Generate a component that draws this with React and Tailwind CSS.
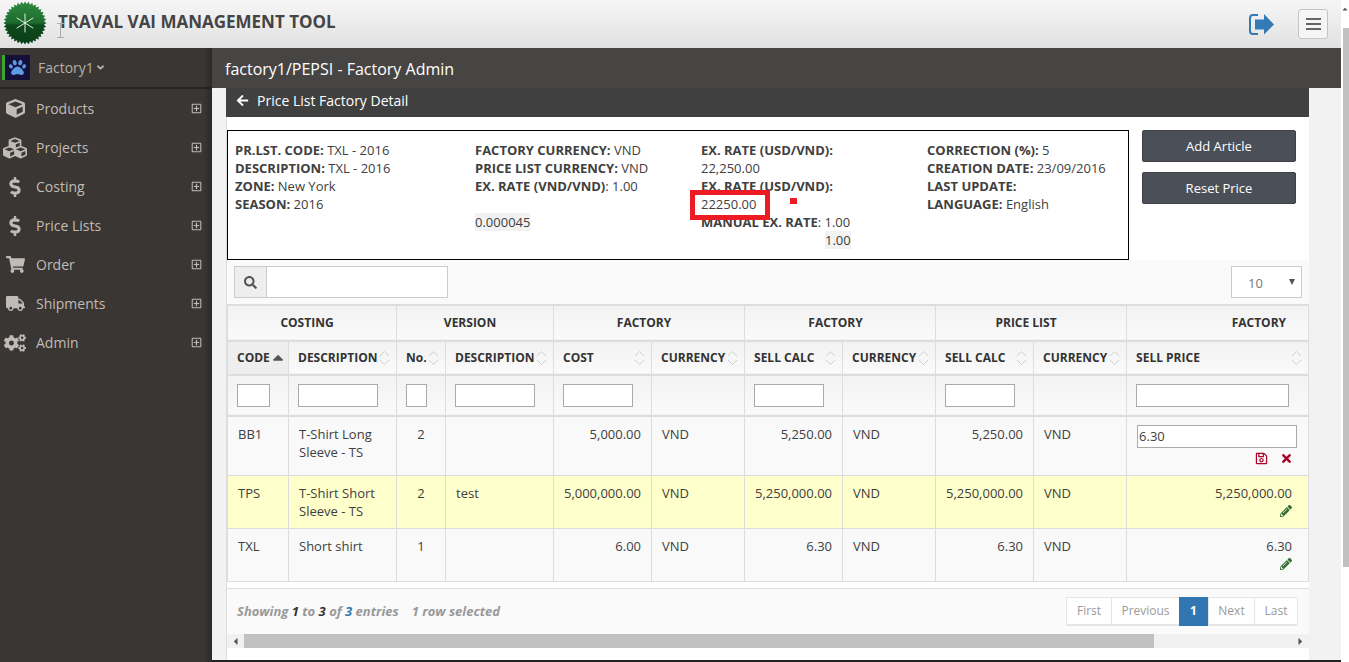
import React from 'react';
import {
    FaCube, FaCubes, FaDollarSign, FaShoppingCart, FaTruck, FaCogs, FaRegPlusSquare,
    FaArrowLeft, FaSearch, FaRegSave, FaTimes, FaPencilAlt, FaPaw, FaAngleDown, FaCaretUp, FaCaretLeft, FaCaretRight
} from 'react-icons/fa';

const menu = [
    { label: 'Products', icon: FaCube, size: 'text-[19px]' },
    { label: 'Projects', icon: FaCubes, size: 'text-[24px]' },
    { label: 'Costing', icon: FaDollarSign, size: 'text-[20px]' },
    { label: 'Price Lists', icon: FaDollarSign, size: 'text-[20px]' },
    { label: 'Order', icon: FaShoppingCart, size: 'text-[19px]' },
    { label: 'Shipments', icon: FaTruck, size: 'text-[19px]' },
    { label: 'Admin', icon: FaCogs, size: 'text-[22px]' },
];

const cols = [61, 108, 49, 108, 98, 93, 98, 93, 98, 93, 182];

const heads = [
    { label: 'CODE', sorted: true },
    { label: 'DESCRIPTION', filter: 'w-[80px]' },
    { label: 'No.', filter: 'w-[21px]' },
    { label: 'DESCRIPTION', filter: 'w-[80px]' },
    { label: 'COST', filter: 'w-[70px]' },
    { label: 'CURRENCY' },
    { label: 'SELL CALC', filter: 'w-[70px]' },
    { label: 'CURRENCY' },
    { label: 'SELL CALC', filter: 'w-[70px]' },
    { label: 'CURRENCY' },
    { label: 'SELL PRICE', filter: 'w-[153px]' },
];

const rows = [
    { h: 'h-[60px]', bg: 'bg-[#f9f9f9]', code: 'BB1', desc: ['T-Shirt Long', 'Sleeve - TS'], no: '2', ver: '', cost: '5,000.00', calc: '5,250.00', edit: true },
    { h: 'h-[53px]', bg: 'bg-[#ffffcc]', code: 'TPS', desc: ['T-Shirt Short', 'Sleeve - TS'], no: '2', ver: 'test', cost: '5,000,000.00', calc: '5,250,000.00', price: '5,250,000.00' },
    { h: 'h-[53px]', bg: 'bg-[#f9f9f9]', code: 'TXL', desc: ['Short shirt'], no: '1', ver: '', cost: '6.00', calc: '6.30', price: '6.30' },
];

const pages = [
    { label: 'First', w: 'w-[45px]' },
    { label: 'Previous', w: 'w-[68px]' },
    { label: '1', w: 'w-[29px]', active: true },
    { label: 'Next', w: 'w-[46px]' },
    { label: 'Last', w: 'w-[44px]', last: true },
];

const Sort = () => (
    <svg width="13" height="18" viewBox="0 0 13 18" fill="none" stroke="#cfcfcf" strokeWidth="1" className="shrink-0">
        <path d="M2 7 L6.5 2.5 L11 7" />
        <path d="M2 11 L6.5 15.5 L11 11" />
    </svg>
);

const Logo = () => {
    const teeth = [];
    for (let i = 0; i < 72; i++) {
        const a = (i * Math.PI) / 36;
        const r = i % 2 === 0 ? 21.5 : 19;
        teeth.push(`${22 + r * Math.cos(a)},${22 + r * Math.sin(a)}`);
    }
    return (
        <svg width="44" height="44" viewBox="0 0 44 44">
            <defs>
                <linearGradient id="logoGreen" x1="0" y1="0" x2="0" y2="1">
                    <stop offset="0" stopColor="#2f8a3f" />
                    <stop offset="0.5" stopColor="#1c6b2c" />
                    <stop offset="0.55" stopColor="#0d4a1c" />
                    <stop offset="1" stopColor="#0b3f17" />
                </linearGradient>
            </defs>
            <polygon points={teeth.join(' ')} fill="url(#logoGreen)" />
            <g stroke="#e8efe8" strokeWidth="1" strokeLinecap="round">
                <path d="M22 13 L22 31" />
                <path d="M14 17 L30 27" />
                <path d="M30 17 L14 27" />
            </g>
        </svg>
    );
};

const SignOut = () => (
    <svg width="25" height="21" viewBox="0 0 25 21" className="mr-[24px]">
        <path d="M9 1 H4 Q1 1 1 4 V17 Q1 20 4 20 H9" fill="none" stroke="#337ab7" strokeWidth="2" />
        <path d="M6 5.5 H15 V0 L25 10.5 L15 20.5 V15.5 H6 Z" fill="#337ab7" />
    </svg>
);

const Pair = ({ label, value }) => (
    <div>
        <b className="font-bold">{label}</b> {value}
    </div>
);

export default function App() {
    return (
        <div className="relative h-screen w-full overflow-hidden flex bg-white font-['Open_Sans',sans-serif] text-[13px] text-[#404040]">
            <div className="flex-1 min-w-0 flex flex-col">
                {/* Header */}
                <header className="h-[48px] shrink-0 flex items-center bg-gradient-to-b from-[#f6f6f6] to-[#e1e1e1]">
                    <div className="ml-[3px] mt-[-2px] flex"><Logo /></div>
                    <h1 className="ml-[11px] mt-[-5px] text-[17px] font-bold text-[#444]">TRAVAL VAI MANAGEMENT TOOL</h1>
                    <div className="ml-auto flex items-center pr-[13px]">
                        <SignOut />
                        <button className="w-[30px] h-[30px] border border-[#c4c4c4] rounded-[3px] bg-[#f5f5f5] flex flex-col items-center justify-center gap-[3px]">
                            <span className="w-[15px] h-[2px] bg-[#666]" />
                            <span className="w-[15px] h-[2px] bg-[#666]" />
                            <span className="w-[15px] h-[2px] bg-[#666]" />
                        </button>
                    </div>
                </header>

                <div className="flex-1 min-h-0 flex">
                    {/* Sidebar */}
                    <aside className="w-[212px] shrink-0 bg-gradient-to-r from-[#3a3633] from-[96%] to-[#2b2927] text-[#c0bbb7]">
                        <div className="h-[41px] flex items-center pl-[2px] border-b-2 border-[#252322]">
                            <span className="w-[3px] h-[25px] bg-[#3aa82e]" />
                            <span className="w-[25px] h-[25px] bg-[#14103a] flex items-center justify-center">
                                <FaPaw className="text-[#5b9be8] text-[17px]" />
                            </span>
                            <span className="ml-[8px] text-[14px] text-[#b5b0ac]">Factory1</span>
                            <FaAngleDown className="ml-[1px] text-[11px]" />
                        </div>
                        <nav>
                            {menu.map(item => {
                                const Icon = item.icon;
                                return (
                                    <div key={item.label} className="h-[39px] flex items-center text-[14px]">
                                        <span className="w-[36px] pr-[6px] flex justify-center"><Icon className={item.size} /></span>
                                        <span>{item.label}</span>
                                        <FaRegPlusSquare className="ml-auto mr-[10px] text-[11px]" />
                                    </div>
                                );
                            })}
                        </nav>
                    </aside>

                    {/* Content */}
                    <main className="flex-1 min-w-0 flex flex-col bg-[#f2f2f2] border-b-2 border-[#222]">
                        <div className="h-[40px] shrink-0 flex items-center pl-[13px] pt-[2px] bg-[#474544] text-white text-[16px]">
                            factory1/PEPSI - Factory Admin
                        </div>
                        <div className="flex-1 min-h-0 ml-[14px] mr-[32px] flex flex-col bg-white">
                            <div className="h-[29px] shrink-0 flex items-center pl-[10px] pb-[5px] bg-[#404040] text-white text-[14px]">
                                <FaArrowLeft className="text-[13px] mr-[8px]" />
                                Price List Factory Detail
                            </div>

                            <div className="flex flex-1 min-h-0 flex-col border-l border-[#ddd]">
                                {/* Info box and buttons */}
                                <div className="h-[143px] shrink-0 flex pt-[13px]">
                                    <div className="w-[902px] h-[130px] border border-black grid grid-cols-[240px_226px_226px_1fr] pl-[7px] pt-[10px] leading-[18px]">
                                        <div>
                                            <Pair label="PR.LST. CODE:" value="TXL - 2016" />
                                            <Pair label="DESCRIPTION:" value="TXL - 2016" />
                                            <Pair label="ZONE:" value="New York" />
                                            <Pair label="SEASON:" value="2016" />
                                        </div>
                                        <div>
                                            <Pair label="FACTORY CURRENCY:" value="VND" />
                                            <Pair label="PRICE LIST CURRENCY:" value="VND" />
                                            <div><b className="font-bold">EX. RATE (VND/VND)</b>: 1.00</div>
                                            <div className="h-[18px]" />
                                            <span className="bg-[#f2f2f2] inline-block">0.000045</span>
                                        </div>
                                        <div>
                                            <b className="font-bold block">EX. RATE (USD/VND):</b>
                                            <div>22,250.00</div>
                                            <b className="font-bold block">EX. RATE (USD/VND):</b>
                                            <div>22250.00</div>
                                            <div><b className="font-bold">MANUAL EX. RATE</b>: 1.00</div>
                                            <div className="pl-[124px]"><span className="bg-[#f2f2f2] inline-block">1.00</span></div>
                                        </div>
                                        <div>
                                            <Pair label="CORRECTION (%):" value="5" />
                                            <Pair label="CREATION DATE:" value="23/09/2016" />
                                            <Pair label="LAST UPDATE:" value="" />
                                            <Pair label="LANGUAGE:" value="English" />
                                        </div>
                                    </div>
                                    <div className="ml-[13px] flex flex-col gap-[10px]">
                                        <button className="w-[154px] h-[32px] pt-[1px] bg-[#4b4f57] border border-[#3d4047] text-white rounded-[2px]">Add Article</button>
                                        <button className="w-[154px] h-[32px] pt-[1px] bg-[#4b4f57] border border-[#3d4047] text-white rounded-[2px]">Reset Price</button>
                                    </div>
                                </div>

                                {/* Toolbar */}
                                <div className="h-[45px] shrink-0 flex items-start pt-[6px] pl-[7px] pr-[7px] bg-[#fafafa] border-b border-[#ddd]">
                                    <div className="flex h-[32px] w-[214px] border border-[#ccc]">
                                        <span className="w-[32px] flex items-center justify-center bg-[#eee] border-r border-[#ccc] text-[#555]">
                                            <FaSearch className="text-[13px]" />
                                        </span>
                                        <input className="flex-1 min-w-0 bg-white outline-none" />
                                    </div>
                                    <div className="ml-auto w-[71px] h-[32px] border border-[#ccc] bg-white flex items-center pl-[16px] text-[#777]">
                                        <span className="mt-[3px]">10</span>
                                        <span className="ml-[26px] w-0 h-0 border-x-[3.5px] border-x-transparent border-t-[6px] border-t-[#555]" />
                                    </div>
                                </div>

                                {/* Table */}
                                <table className="table-fixed border-collapse w-[1082px] shrink-0 bg-[#f9f9f9]">
                                    <colgroup>
                                        {cols.map((w, i) => <col key={i} style={{ width: w }} />)}
                                    </colgroup>
                                    <thead className="text-[12px] font-bold text-[#333]">
                                        <tr className="h-[35px] bg-gradient-to-b from-[#f2f2f2] to-[#fafafa] border-b-2 border-[#ddd]">
                                            <th colSpan={2} className="border border-[#ddd] font-bold pr-[10px]">COSTING</th>
                                            <th colSpan={2} className="border border-[#ddd] font-bold pr-[10px]">VERSION</th>
                                            <th colSpan={2} className="border border-[#ddd] font-bold pr-[10px]">FACTORY</th>
                                            <th colSpan={2} className="border border-[#ddd] font-bold pr-[9px]">FACTORY</th>
                                            <th colSpan={2} className="border border-[#ddd] font-bold pr-[10px]">PRICE LIST</th>
                                            <th className="border border-[#ddd] font-bold text-right pr-[22px]">FACTORY</th>
                                        </tr>
                                        <tr className="h-[34px] bg-gradient-to-b from-[#f2f2f2] to-[#fafafa] border-b-2 border-[#ddd]">
                                            {heads.map((h, i) => (
                                                <th key={i} className={`border border-[#ddd] font-bold pl-[9px] pr-[5px] ${h.sorted ? 'bg-[#eeeeee]' : ''}`}>
                                                    <div className="flex items-center justify-between">
                                                        <span className="whitespace-nowrap">{h.label}</span>
                                                        {h.sorted ? <FaCaretUp className="text-[#555] text-[17px] mr-[-3px]" /> : <Sort />}
                                                    </div>
                                                </th>
                                            ))}
                                        </tr>
                                        <tr className="h-[41px] bg-gradient-to-b from-[#f2f2f2] to-[#fafafa] border-b-2 border-[#ddd]">
                                            {heads.map((h, i) => (
                                                <th key={i} className="border border-[#ddd] pl-[9px] text-left">
                                                    {(h.filter || h.sorted) && (
                                                        <input className={`block h-[23px] bg-white border border-[#aaa] outline-none ${h.filter || 'w-[33px]'}`} />
                                                    )}
                                                </th>
                                            ))}
                                        </tr>
                                    </thead>
                                    <tbody>
                                        {rows.map(r => (
                                            <tr key={r.code} className={`${r.h} ${r.bg} align-top leading-[18px]`}>
                                                <td className="border border-[#ddd] pl-[10px] pt-[8px]">{r.code}</td>
                                                <td className="border border-[#ddd] pl-[10px] pt-[8px]">
                                                    {r.desc.map(d => <div key={d}>{d}</div>)}
                                                </td>
                                                <td className="border border-[#ddd] text-center pt-[8px]">{r.no}</td>
                                                <td className="border border-[#ddd] pl-[10px] pt-[8px]">{r.ver}</td>
                                                <td className="border border-[#ddd] pr-[10px] text-right pt-[8px]">{r.cost}</td>
                                                <td className="border border-[#ddd] pl-[10px] pt-[8px]">VND</td>
                                                <td className="border border-[#ddd] pr-[10px] text-right pt-[8px]">{r.calc}</td>
                                                <td className="border border-[#ddd] pl-[10px] pt-[8px]">VND</td>
                                                <td className="border border-[#ddd] pr-[10px] text-right pt-[8px]">{r.calc}</td>
                                                <td className="border border-[#ddd] pl-[10px] pt-[8px]">VND</td>
                                                {r.edit ? (
                                                    <td className="border border-[#ddd] pl-[10px] pr-[11px] pt-[8px]">
                                                        <input readOnly value="6.30" className="block w-full h-[23px] bg-white border border-[#aaa] pl-[1px] outline-none" />
                                                        <div className="flex justify-end gap-[12px] pr-[4px] pt-[4px] text-[13px]">
                                                            <FaRegSave className="text-[#a90329]" />
                                                            <FaTimes className="text-[#a90329]" />
                                                        </div>
                                                    </td>
                                                ) : (
                                                    <td className="border border-[#ddd] pr-[16px] text-right pt-[8px]">
                                                        <div>{r.price}</div>
                                                        <FaPencilAlt className="text-[#356e35] text-[12px] ml-auto mt-[3px]" />
                                                    </td>
                                                )}
                                            </tr>
                                        ))}
                                    </tbody>
                                </table>

                                {/* Footer */}
                                <div className="mt-[6px] h-[46px] shrink-0 flex items-start justify-between pt-[8px] pl-[10px] pr-[11px] bg-[#fafafa] border-t border-[#ddd]">
                                    <div className="pt-[5px] italic font-bold text-[13px] text-[#999]">
                                        Showing <span className="text-[#333]">1</span> to <span className="text-[#333]">3</span> of <span className="text-[#3276b1]">3</span> entries
                                        <span className="ml-[13px]">1 row selected</span>
                                    </div>
                                    <div className="flex">
                                        {pages.map(p => (
                                            <span key={p.label} className={`h-[29px] ${p.w} flex items-center justify-center border-b-2 border-t text-[12px] ${p.active ? 'bg-[#3276b1] text-white font-bold border-[#3276b1]' : 'bg-white text-[#999] border-l border-[#e5e5e5]'} ${p.last ? 'border-r rounded-r-[2px]' : ''}`}>
                                                {p.label}
                                            </span>
                                        ))}
                                    </div>
                                </div>

                                {/* Horizontal scrollbar */}
                                <div className="h-[14px] shrink-0 flex items-center bg-[#f1f1f1] text-[#555] text-[11px]">
                                    <span className="w-[17px] flex justify-center"><FaCaretLeft /></span>
                                    <span className="w-[910px] h-full bg-[#c1c1c1]" />
                                    <span className="ml-auto w-[17px] flex justify-center"><FaCaretRight /></span>
                                </div>
                            </div>
                        </div>
                    </main>
                </div>
            </div>

            {/* Page scrollbar */}
            <div className="w-[8px] shrink-0 flex flex-col bg-white">
                <div className="h-[28px] flex justify-center pt-[5px] text-[#555]"><FaCaretUp className="text-[8px]" /></div>
                <div className="h-[539px] bg-[#c1c1c1] ml-[2px]" />
            </div>

            {/* Text cursor caught in the screenshot */}
            <svg width="7" height="15" viewBox="0 0 7 15" fill="none" stroke="#aaa" strokeWidth="1" className="absolute left-[57px] top-[23px]">
                <path d="M0 0.5 H7 M3.5 0.5 V14.5 M0 14.5 H7" />
            </svg>

            {/* Red annotation drawn on the screenshot */}
            <div className="absolute left-[690px] top-[190px] w-[80px] h-[30px] border-[5px] border-[#ed1c24]" />
            <div className="absolute left-[790px] top-[198px] w-[7px] h-[6px] bg-[#ed1c24]" />
        </div>
    );
}
